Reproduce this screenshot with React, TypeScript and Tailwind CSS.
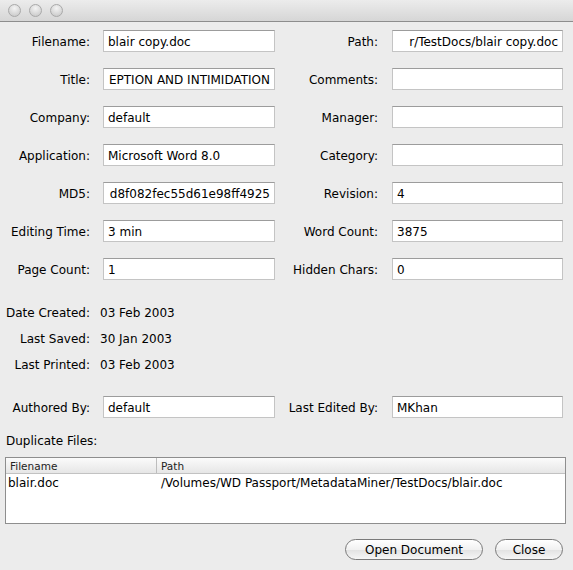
import React from 'react';

const font = "font-['DejaVu_Sans','Liberation_Sans',sans-serif]";

// a leading '…' marks a value scrolled to its end: only the tail shows, flush right
const rows: [string, string, string, string][] = [
  ['Filename:', 'blair copy.doc', 'Path:', '…r/TestDocs/blair copy.doc'],
  ['Title:', '…EPTION AND INTIMIDATION', 'Comments:', ''],
  ['Company:', 'default', 'Manager:', ''],
  ['Application:', 'Microsoft Word 8.0', 'Category:', ''],
  ['MD5:', '…d8f082fec55d61e98ff4925', 'Revision:', '4'],
  ['Editing Time:', '3 min', 'Word Count:', '3875'],
  ['Page Count:', '1', 'Hidden Chars:', '0'],
];

const dates = [
  ['Date Created:', '03 Feb 2003'],
  ['Last Saved:', '30 Jan 2003'],
  ['Last Printed:', '03 Feb 2003'],
];

function Field({ value }: { value: string }) {
  const scrolled = value.startsWith('…');
  return (
    <div
      className={`flex h-[22px] items-center overflow-hidden whitespace-nowrap border border-[#c4c4c4] border-t-[#9c9c9c] bg-white px-[4px] pt-[1px] ${
        scrolled ? 'justify-end' : ''
      }`}
    >
      <span className="shrink-0">{scrolled ? value.slice(1) : value}</span>
    </div>
  );
}

function Light() {
  return (
    <span className="block h-[13px] w-[13px] rounded-full border border-[#a9a9a9] bg-[radial-gradient(circle_at_50%_30%,#f4f4f4,#d2d2d2_70%,#c4c4c4)]" />
  );
}

function Button({ label, className }: { label: string; className: string }) {
  return (
    <button
      className={`flex h-[21px] items-center justify-center rounded-full border border-[#7a7a7a] bg-[linear-gradient(#ffffff,#f1f1f1_50%,#e2e2e2_51%,#f6f6f6)] text-[12px] text-black ${className}`}
    >
      {label}
    </button>
  );
}

export default function App() {
  return (
    <div className={`h-[570px] w-[573px] overflow-hidden bg-[#ececec] text-[12px] text-black ${font}`}>
      <div className="flex h-[22px] items-center gap-[8px] border-b border-[#8d8d8d] bg-[linear-gradient(#ececec,#d6d6d6)] pl-[8px]">
        <Light />
        <Light />
        <Light />
      </div>

      <div className="grid grid-cols-[103px_172px_117px_171px] items-center gap-y-[16px] pt-[8px]">
        {rows.map(([l1, v1, l2, v2]) => (
          <React.Fragment key={l1}>
            <span className="pr-[13px] pt-[1px] text-right">{l1}</span>
            <Field value={v1} />
            <span className="pr-[14px] pt-[1px] text-right">{l2}</span>
            <Field value={v2} />
          </React.Fragment>
        ))}
      </div>

      <div className="mt-[20px]">
        {dates.map(([label, value]) => (
          <div key={label} className="flex h-[26px] items-center">
            <span className="w-[90px] text-right">{label}</span>
            <span className="pl-[10px]">{value}</span>
          </div>
        ))}
      </div>

      <div className="mt-[18px] grid grid-cols-[103px_172px_117px_171px] items-center">
        <span className="pr-[13px] pt-[1px] text-right">Authored By:</span>
        <Field value="default" />
        <span className="pr-[14px] pt-[1px] text-right">Last Edited By:</span>
        <Field value="MKhan" />
      </div>

      <div className="mt-[14px] flex h-[16px] items-center pl-[6px] pt-[1px]">Duplicate Files:</div>

      <div className="ml-[5px] mt-[9px] h-[67px] w-[561px] border border-[#8e8e8e] bg-white">
        <div className="flex h-[16px] border-b border-[#c2c2c2] bg-[linear-gradient(#fbfbfb,#e6e6e6)] text-[10.5px] text-[#222]">
          <span className="w-[151px] border-r border-[#bdbdbd] pl-[4px] leading-[16px]">Filename</span>
          <span className="pl-[4px] leading-[16px]">Path</span>
        </div>
        <div className="flex h-[17px] items-center">
          <span className="w-[151px] pl-[2px]">blair.doc</span>
          <span className="pl-[4px]">/Volumes/WD Passport/MetadataMiner/TestDocs/blair.doc</span>
        </div>
      </div>

      <div className="mt-[15px] flex justify-end gap-[12px] pr-[10px]">
        <Button label="Open Document" className="w-[138px]" />
        <Button label="Close" className="w-[68px]" />
      </div>
    </div>
  );
}
